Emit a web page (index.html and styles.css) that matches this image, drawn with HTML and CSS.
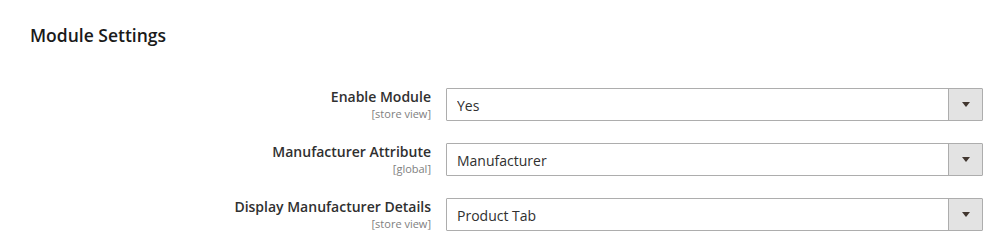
FILE: index.html
```html
<!DOCTYPE html>
<html lang="en">
<head>
<meta charset="UTF-8" />
<meta name="viewport" content="width=device-width, initial-scale=1" />
<title>Module Settings</title>
<link rel="stylesheet" href="styles.css">
</head>
<body>

<div class="section">
  <h2 class="section-title">Module Settings</h2>

  <div class="field">
    <div class="label">
      <span>Enable Module</span>
      <span class="scope">[store view]</span>
    </div>
    <div class="control">
      <select>
        <option>Yes</option>
        <option>No</option>
      </select>
    </div>
  </div>

  <div class="field">
    <div class="label">
      <span>Manufacturer Attribute</span>
      <span class="scope">[global]</span>
    </div>
    <div class="control">
      <select>
        <option>Manufacturer</option>
      </select>
    </div>
  </div>

  <div class="field">
    <div class="label">
      <span>Display Manufacturer Details</span>
      <span class="scope">[store view]</span>
    </div>
    <div class="control">
      <select>
        <option>Product Tab</option>
        <option>Sidebar</option>
      </select>
    </div>
  </div>
</div>

</body>
</html>
```

FILE: styles.css
```css
body {
  margin: 0;
  font-family: "Open Sans", Arial, sans-serif;
  color: #303030;
  background: #fff;
}
.section {
  padding: 24px 0 0 30px;
}
.section-title {
  margin: 0 0 41px;
  font-size: 17.5px;
  font-weight: 600;
  line-height: 23px;
  color: #1a1a1a;
}
.field {
  display: grid;
  grid-template-columns: 401px 537px;
  column-gap: 15px;
  margin-bottom: 22px;
}
.label {
  display: flex;
  flex-direction: column;
  align-items: flex-end;
  text-align: right;
  font-size: 14px;
  font-weight: 600;
  line-height: 18px;
}
.scope {
  font-size: 11px;
  font-weight: 400;
  line-height: 15px;
  color: #808080;
}
.control {
  position: relative;
  height: 33px;
}
.control::before {
  content: "";
  position: absolute;
  top: 1px;
  right: 1px;
  bottom: 1px;
  width: 33px;
  background: #e3e3e3;
  border-left: 1px solid #adadad;
  pointer-events: none;
}
.control::after {
  content: "";
  position: absolute;
  top: 14px;
  right: 13px;
  border-left: 4px solid transparent;
  border-right: 4px solid transparent;
  border-top: 5px solid #41362f;
  pointer-events: none;
}
select {
  -webkit-appearance: none;
  appearance: none;
  box-sizing: border-box;
  width: 100%;
  height: 33px;
  padding: 1px 40px 0 10px;
  font-family: inherit;
  font-size: 14px;
  color: #303030;
  background: #fff;
  border: 1px solid #adadad;
  border-radius: 1px;
  outline: none;
}
```
